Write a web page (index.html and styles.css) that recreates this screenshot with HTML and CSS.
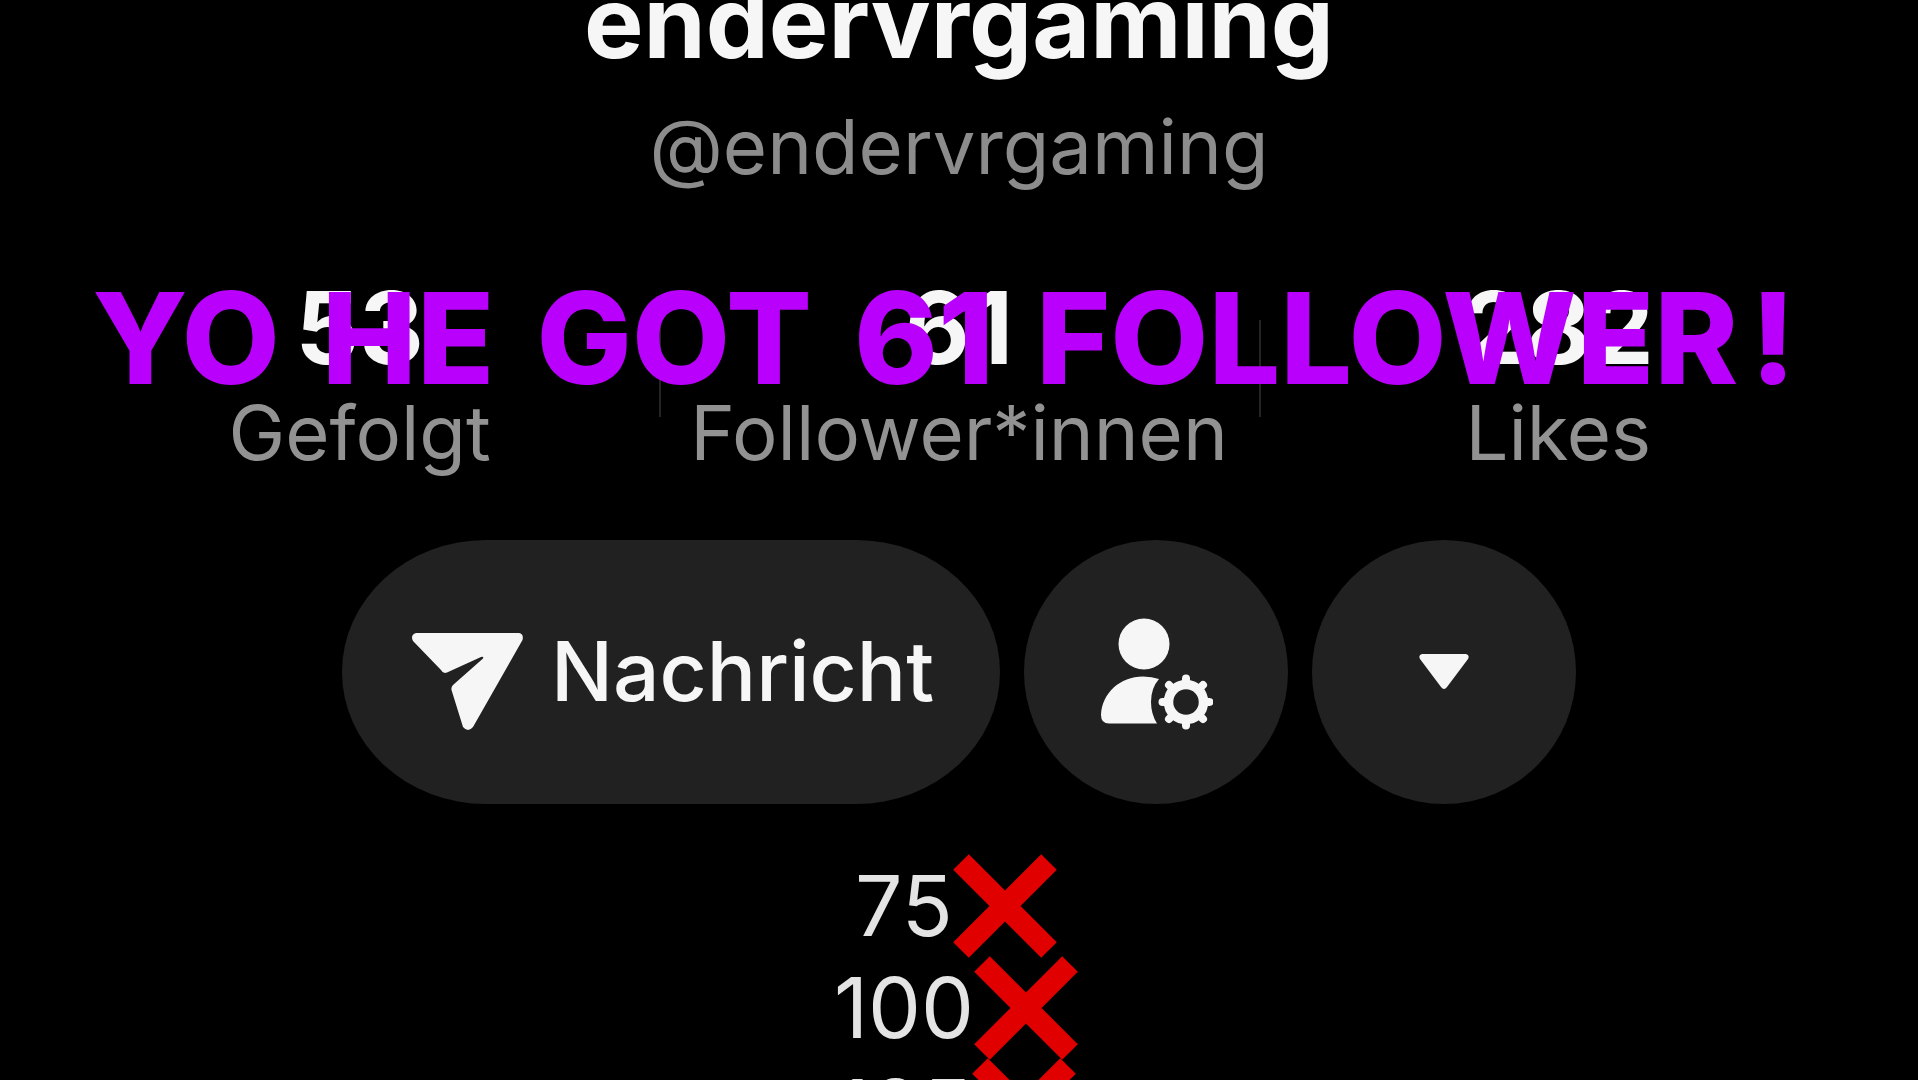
FILE: index.html
```
<!DOCTYPE html>
<html lang="de">
<head>
<meta charset="utf-8">
<title>endervrgaming</title>
<link rel="stylesheet" href="styles.css">
</head>
<body>
<main class="profile">
  <h1 class="name">endervrgaming</h1>
  <p class="handle">@endervrgaming</p>

  <section class="stats">
    <div class="stat"><strong class="stat-value">53</strong><span class="stat-label">Gefolgt</span></div>
    <div class="stat"><strong class="stat-value">61</strong><span class="stat-label">Follower*innen</span></div>
    <div class="stat"><strong class="stat-value">282</strong><span class="stat-label">Likes</span></div>
    <p class="caption"><span>YO</span><span>HE</span><span>GOT</span><span>61</span><span class="caption-end"><span>FOLLOWER</span><span>!</span></span></p>
  </section>

  <div class="actions">
    <button class="action action-message" type="button">
      <svg width="111" height="98" viewBox="0 0 111 98" fill="currentColor" aria-hidden="true">
        <path d="M4 0H107Q112 1 110.500 7L61 94Q56 100 51 94L39.500 57Q39 54 41 52L71 25.500Q72 23 69 24L35 39.500Q31 41 29 37L1 8Q-2 2 4 0Z"/>
      </svg>
      <span>Nachricht</span>
    </button>
    <button class="action" type="button" aria-label="Konto verwalten">
      <svg width="113" height="116" viewBox="0 -4 113 116" fill="currentColor" aria-hidden="true">
        <circle cx="44" cy="26" r="25.500"/>
        <path d="M43 58.500Q52 58.500 59 61Q51 70 51 84Q51 96 57 105.500H9Q1 105.500 1 97C2 75 20 58.500 43 58.500Z"/>
        <g transform="translate(86 84)" fill="none" stroke="currentColor">
          <circle r="17.500" stroke-width="9.500"/>
          <path stroke-width="8" stroke-linecap="round" d="M0 -19V-23.500M0 19V23.500M-19 0H-23.500M19 0H23.500M-14 -14L-17 -17M14 -14L17 -17M-14 14L-17 17M14 14L17 17"/>
        </g>
      </svg>
    </button>
    <button class="action" type="button" aria-label="Mehr anzeigen">
      <svg width="50" height="36" viewBox="0 0 50 36" fill="currentColor" aria-hidden="true">
        <path d="M3 0H47Q51 1 49 5L28 33Q25 37 22 33L1 5Q-1 1 3 0Z"/>
      </svg>
    </button>
  </div>

  <ul class="goals">
    <li class="goal">75<svg class="cross" viewBox="0 0 104 104" role="img" aria-label="nicht erreicht"><path d="M8 8L96 96M96 8L8 96"/></svg></li>
    <li class="goal">100<svg class="cross" viewBox="0 0 104 104" role="img" aria-label="nicht erreicht"><path d="M8 8L96 96M96 8L8 96"/></svg></li>
    <li class="goal">125<svg class="cross" viewBox="0 0 104 104" role="img" aria-label="nicht erreicht"><path d="M8 8L96 96M96 8L8 96"/></svg></li>
  </ul>
</main>
</body>
</html>
```
FILE: styles.css
```
* {
  box-sizing: border-box;
}

body {
  margin: 0;
  height: 100vh;
  overflow: hidden;
  background: #000;
  color: #f6f6f6;
  font-family: Inter, "Liberation Sans", sans-serif;
}

.profile {
  display: flex;
  flex-direction: column;
  align-items: center;
  margin-top: -38px;
}

.name {
  margin: 0;
  font-size: 100px;
  line-height: 120px;
  font-weight: 700;
}

.handle {
  margin: 16px 0 0;
  color: #8c8c8c;
  font-size: 76px;
  line-height: 96px;
}

.stats {
  position: relative;
  display: grid;
  grid-template-columns: repeat(3, 1fr);
  width: 100%;
  margin-top: 78px;
  padding: 0 60px;
}

.stat {
  position: relative;
  display: flex;
  flex-direction: column;
  align-items: center;
}

.stat + .stat::before {
  content: "";
  position: absolute;
  left: 0;
  top: 48px;
  width: 2px;
  height: 97px;
  background: #242424;
}

.stat-value {
  font-size: 100px;
  line-height: 112px;
  font-weight: 700;
}

.stat-label {
  color: #929292;
  font-size: 76px;
  line-height: 96px;
}

.caption {
  position: absolute;
  inset: 2px 30px auto 0;
  display: flex;
  justify-content: center;
  gap: 42px;
  margin: 0;
  color: #b900fc;
  font-size: 127px;
  line-height: 128px;
  font-weight: 800;
  white-space: nowrap;
}

.caption-end {
  display: flex;
  gap: 12px;
}

.actions {
  display: flex;
  gap: 24px;
  margin-top: 60px;
}

.action {
  display: flex;
  align-items: center;
  justify-content: center;
  width: 264px;
  height: 264px;
  padding: 0;
  border: 0;
  border-radius: 132px;
  background: #212121;
  color: #f6f6f6;
  font: 500 82px/96px Inter, "Liberation Sans", sans-serif;
}

.action-message {
  gap: 28px;
  width: auto;
  padding: 0 66px 0 70px;
  border-radius: 144px / 132px;
}

.action-message svg {
  margin-top: 20px;
}

.goals {
  margin: 51px 0 0;
  padding: 0 6px 0 0;
  list-style: none;
}

.goal {
  display: flex;
  align-items: center;
  justify-content: center;
  height: 102px;
  color: #e4e4e4;
  font-size: 84px;
  line-height: 102px;
}

.cross {
  flex: none;
  width: 104px;
  height: 104px;
  fill: none;
  stroke: #e00000;
  stroke-width: 22px;
}
```
